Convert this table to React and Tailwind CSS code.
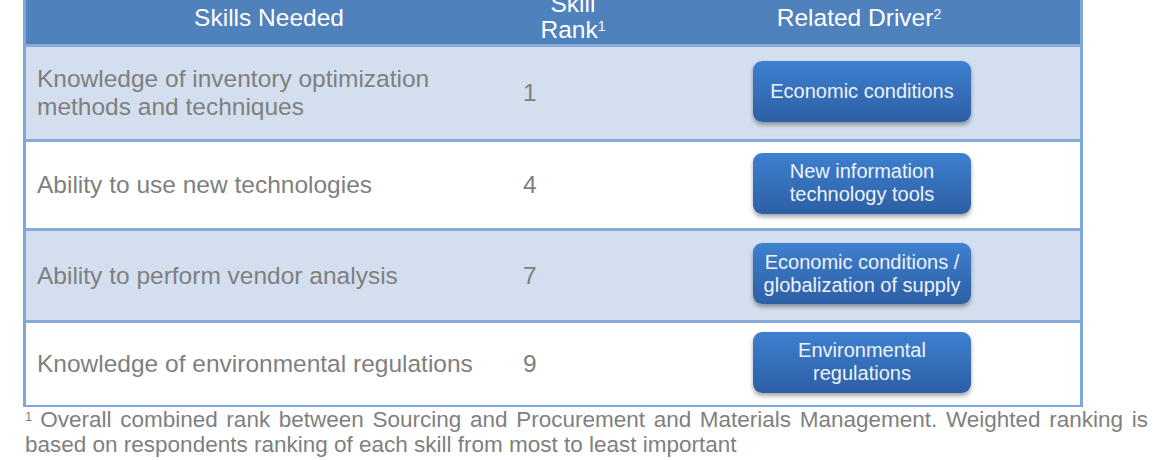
const rows = [
  { skill: ['Knowledge of inventory optimization', 'methods and techniques'], rank: '1', driver: ['Economic conditions'], shade: true, h: 'h-[95px]' },
  { skill: ['Ability to use new technologies'], rank: '4', driver: ['New information', 'technology tools'], shade: false, h: 'h-[89px]' },
  { skill: ['Ability to perform vendor analysis'], rank: '7', driver: ['Economic conditions /', 'globalization of supply'], shade: true, h: 'h-[92px]' },
  { skill: ['Knowledge of environmental regulations'], rank: '9', driver: ['Environmental', 'regulations'], shade: false, h: 'h-[85px]' },
];

function DriverButton({ lines }) {
  return (
    <div className="w-[218px] h-[61px] rounded-[9px] bg-gradient-to-b from-[#3e80d0] to-[#2d5fa5] shadow-[0_3px_4px_rgba(0,0,0,0.35)] flex flex-col items-center justify-center text-[20px] leading-[23px] text-[#eef3fb]">
      {lines.map((l) => (
        <span key={l}>{l}</span>
      ))}
    </div>
  );
}

export default function App() {
  return (
    <div className="w-[1175px] h-[460px] overflow-hidden bg-white font-['Liberation_Sans',Arial,sans-serif]">
      <div className="ml-[23px] w-[1060px] border-x-[3px] border-b-[2px] border-[#80a7da]">
        {/* header */}
        <div className="h-[44px] bg-[#4f81bd] grid grid-cols-[486px_116px_1fr] text-white text-[24.5px] overflow-hidden">
          <div className="flex items-center justify-center pb-[9px]">Skills Needed</div>
          <div className="flex flex-col items-center -mt-[9px] leading-[26px] pl-[6px]">
            <span>Skill</span>
            <span>
              Rank<sup className="text-[14px]">1</sup>
            </span>
          </div>
          <div className="flex items-center justify-center pl-[10px] pb-[9px]">
            <span>
              Related Driver<sup className="text-[14px]">2</sup>
            </span>
          </div>
        </div>
        {rows.map((r, i) => (
          <div
            key={i}
            className={`${r.h} border-t-[3px] border-[#86aadb] grid grid-cols-[486px_116px_1fr] items-center text-[24.5px] leading-[28px] text-[#7f7f7f] ${r.shade ? 'bg-[#d3dfee]' : 'bg-white'}`}
          >
            <div className="pl-[11px] flex flex-col">
              {r.skill.map((s) => (
                <span key={s}>{s}</span>
              ))}
            </div>
            <div className="pl-[11px]">{r.rank}</div>
            <div className="pl-[125px] mb-[4px]">
              <DriverButton lines={r.driver} />
            </div>
          </div>
        ))}
      </div>
      <div className="ml-[25px] w-[1123px] text-[22.5px] leading-[25px] text-[#7f7f7f]">
        <div className="text-justify [text-align-last:justify]">
          <sup className="text-[13px] mr-[8px]">1</sup>
          Overall combined rank between Sourcing and Procurement and Materials Management. Weighted ranking is
        </div>
        <div>based on respondents ranking of each skill from most to least important</div>
        <div>
          <sup className="text-[13px]">2</sup>
        </div>
      </div>
    </div>
  );
}
